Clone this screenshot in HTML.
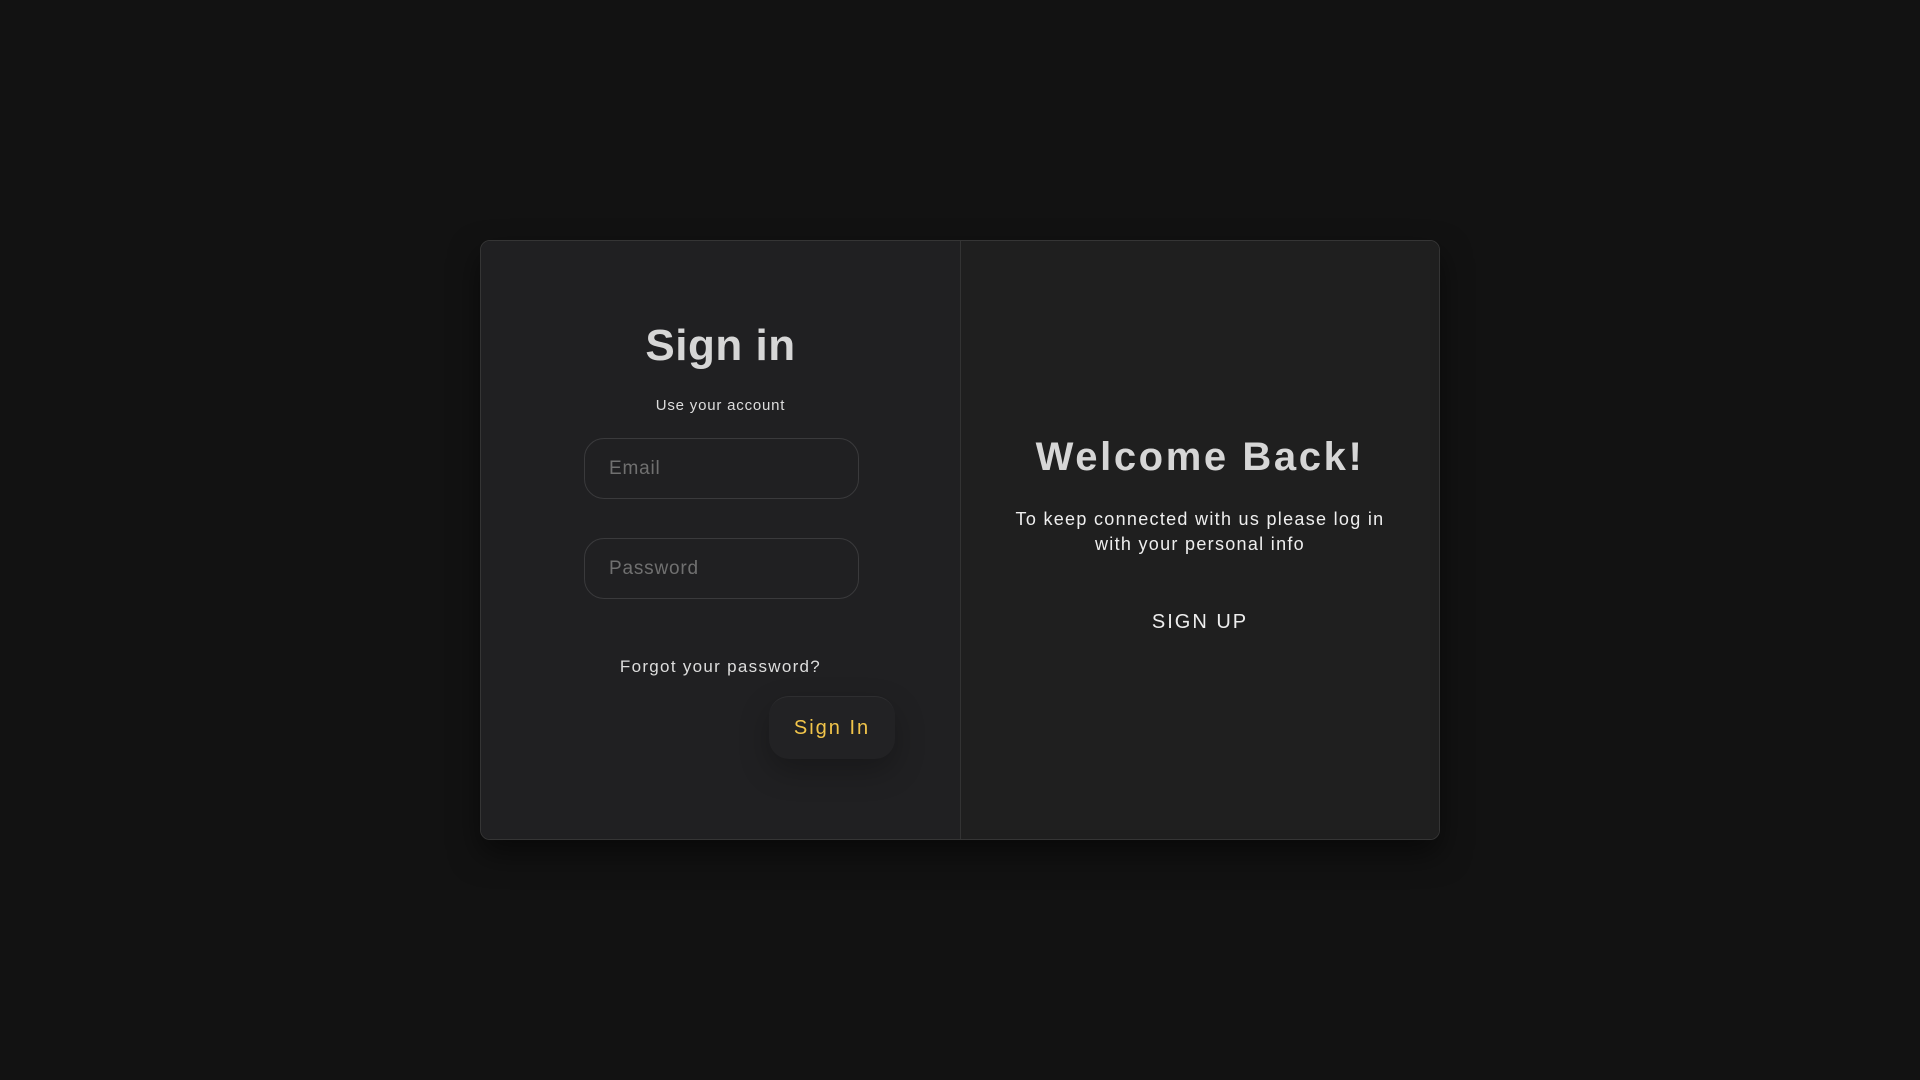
<!DOCTYPE html>
<html><head><style>
*{margin:0;padding:0;box-sizing:border-box}
body{width:1920px;height:1080px;background:#121212;font-family:"Liberation Sans",sans-serif;position:relative;overflow:hidden}
.card{position:absolute;left:480px;top:240px;width:960px;height:600px;border:1px solid #353535;border-radius:10px;overflow:hidden;box-shadow:0 14px 30px rgba(0,0,0,.5);display:flex}
.l{width:480px;height:100%;background:#202022;border-right:1px solid #333;position:relative}
.r{flex:1;background:#1f1f1f;position:relative}
.c{position:absolute;left:0;right:0;text-align:center}
h1{font-size:44px;font-weight:bold;color:#d6d6d6}
.in{position:absolute;left:103px;width:275px;height:61px;border:1px solid #3a3a3c;border-radius:20px;color:#707070;font-size:19px;padding-left:24px;line-height:59px;letter-spacing:0.8px}
</style></head><body>
<div class="card">
<div class="l">
 <div class="c" style="top:80px"><h1 style="letter-spacing:0.5px">Sign in</h1></div>
 <div class="c" style="top:156px;font-size:15px;color:#ddd;letter-spacing:0.8px">Use your account</div>
 <div class="in" style="top:197px">Email</div>
 <div class="in" style="top:297px">Password</div>
 <div class="c" style="top:416px;font-size:17px;color:#ddd;letter-spacing:1.3px">Forgot your password?</div>
 <div style="position:absolute;left:288px;top:455px;width:126px;height:63px;border-radius:20px;background:#222224;border-top:1px solid #2e2e30;box-shadow:0 12px 30px rgba(0,0,0,.25);color:#f2c54a;font-size:20px;letter-spacing:2px;line-height:62px;text-align:center">Sign In</div>
</div>
<div class="r">
 <div class="c" style="top:194px"><h1 style="font-size:40px;letter-spacing:2.6px">Welcome Back!</h1></div>
 <div class="c" style="top:266px;font-size:18px;line-height:25px;color:#eee;letter-spacing:1.3px">To keep connected with us please log in<br>with your personal info</div>
 <div class="c" style="top:370px;font-size:20px;letter-spacing:2px;color:#eee">SIGN UP</div>
</div>
</div>
</body></html>
